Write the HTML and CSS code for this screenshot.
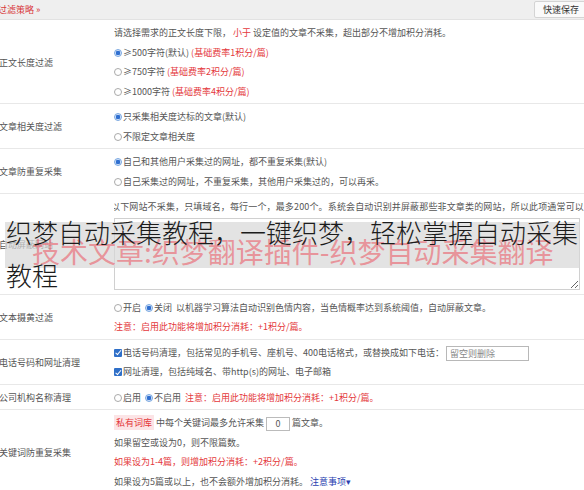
FILE: index.html
```html
<!DOCTYPE html>
<html>
<head>
    <title>过滤策略</title>
    <meta charset="utf-8">
    <link rel="stylesheet" href="styles.css">
</head>
<body>

    <!-- Header -->
    <div class="bar">
        <span class="bar-title">过滤策略 »</span>
        <button class="save">快速保存</button>
    </div>

    <div class="row">
        <div class="label">正文长度过滤</div>
        <div class="body">
            <p>请选择需求的正文长度下限， <em>小于</em> 设定值的文章不采集，超出部分不增加积分消耗。</p>
            <p><i class="radio on"></i>≥500字符(默认) <em>(基础费率1积分/篇)</em></p>
            <p><i class="radio"></i>≥750字符 <em>(基础费率2积分/篇)</em></p>
            <p><i class="radio"></i>≥1000字符 <em>(基础费率4积分/篇)</em></p>
        </div>
    </div>

    <div class="row">
        <div class="label">文章相关度过滤</div>
        <div class="body">
            <p><i class="radio on"></i>只采集相关度达标的文章(默认)</p>
            <p><i class="radio"></i>不限定文章相关度</p>
        </div>
    </div>

    <div class="row">
        <div class="label">文章防重复采集</div>
        <div class="body">
            <p><i class="radio on"></i>自己和其他用户采集过的网址，都不重复采集(默认)</p>
            <p><i class="radio"></i>自己采集过的网址，不重复采集，其他用户采集过的，可以再采。</p>
        </div>
    </div>

    <div class="row">
        <div class="label">自动屏蔽网站</div>
        <div class="body">
            <p class="wide">以下网站不采集，只填域名，每行一个，最多200个。系统会自动识别并屏蔽那些非文章类的网站，所以此项通常可以留空。</p>
            <textarea class="sites"></textarea>
        </div>
    </div>

    <div class="row">
        <div class="label">文本摄黄过滤</div>
        <div class="body">
            <p><i class="radio"></i>开启 &nbsp;<i class="radio on"></i>关闭 &nbsp;以机器学习算法自动识别色情内容，当色情概率达到系统阈值，自动屏蔽文章。</p>
            <p><em>注意：启用此功能将增加积分消耗：+1积分/篇。</em></p>
        </div>
    </div>

    <div class="row">
        <div class="label">电话号码和网址清理</div>
        <div class="body">
            <p><i class="check"></i>电话号码清理，包括常见的手机号、座机号、400电话格式，或替换成如下电话：<input class="phone" type="text" placeholder="留空则删除"></p>
            <p><i class="check"></i>网址清理，包括纯域名、带http(s)的网址、电子邮箱</p>
        </div>
    </div>

    <div class="row">
        <div class="label">公司机构名称清理</div>
        <div class="body">
            <p><i class="radio"></i>启用 &nbsp;<i class="radio on"></i>不启用 &nbsp;<em>注意：启用此功能将增加积分消耗：+1积分/篇。</em></p>
        </div>
    </div>

    <div class="row">
        <div class="label">关键词防重复采集</div>
        <div class="body">
            <p><span class="tag">私有词库</span> 中每个关键词最多允许采集<input class="num" type="text" value="0">篇文章。</p>
            <p>如果留空或设为0，则不限篇数。</p>
            <p><em>如果设为1-4篇，则增加积分消耗：+2积分/篇。</em></p>
            <p>如果设为5篇或以上，也不会额外增加积分消耗。 <a class="more" href="#">注意事项▾</a></p>
        </div>
    </div>

    <!-- overlay caption -->
    <div class="shade"></div>
    <div class="mark">技术文章:织梦翻译插件-织梦自动采集翻译</div>
    <div class="caption first">织梦自动采集教程，一键织梦，轻松掌握自动采集</div>
    <div class="caption second">教程</div>

</body>
</html>
```

FILE: styles.css
```css
html, body {
    overflow: hidden;
}

body {
    margin: 0;
    position: relative;
    background-color: #fff;
    color: #555;
    font-family: "Noto Sans CJK SC", "Noto Sans", sans-serif;
    font-size: 9px;
}

p {
    margin: 0;
    line-height: 19.5px;
    white-space: nowrap;
}

em {
    font-style: normal;
    color: #e4393c;
}

.bar {
    display: flex;
    justify-content: space-between;
    align-items: center;
    height: 19px;
    background-color: #efefef;
    border-bottom: 1px solid #e2e2e2;
}

.bar-title {
    margin-left: -2px;
    color: #d9383a;
}

.save {
    height: 17px;
    margin-right: -4px;
    padding: 0 8px;
    font-family: inherit;
    font-size: 9px;
    color: #333;
    background-color: #fafafa;
    border: 1px solid #d4d4d4;
    border-radius: 2px;
}

.row {
    display: flex;
    align-items: center;
    padding: 3px 0 2px;
    border-bottom: 1px solid #e8e8e8;
}

.label {
    width: 115px;
    flex-shrink: 0;
    margin-left: -1px;
    color: #555;
}

.body {
    flex: 1;
    min-width: 0;
    overflow: hidden;
}

.wide {
    margin-left: -3px;
    letter-spacing: 0.15px;
}

.radio {
    display: inline-block;
    width: 6px;
    height: 6px;
    margin-right: 1px;
    border: 1px solid #aaa;
    border-radius: 50%;
    background-color: #fff;
    vertical-align: -1px;
}

.radio.on {
    border-color: #7aa7e0;
    background: radial-gradient(circle, #2f6fd0 0 2px, #cfe0f7 2.5px);
}

.check {
    display: inline-block;
    position: relative;
    width: 8px;
    height: 8px;
    margin-right: 1px;
    border-radius: 1px;
    background-color: #2f6fc8;
    vertical-align: -1px;
}

.check::after {
    content: "";
    position: absolute;
    left: 2.5px;
    top: 0.5px;
    width: 2px;
    height: 4.5px;
    border: solid #fff;
    border-width: 0 1.5px 1.5px 0;
    transform: rotate(40deg);
}

.sites {
    display: block;
    box-sizing: border-box;
    width: 466px;
    height: 72px;
    margin: 1px 0 2px;
    border: 1px solid #d0d0d0;
}

.phone {
    box-sizing: border-box;
    width: 83px;
    height: 15px;
    margin-left: 2px;
    padding: 0 3px;
    font-family: inherit;
    font-size: 9px;
    border: 1px solid #b8b8b8;
    vertical-align: middle;
}

.phone::placeholder {
    color: #888;
}

.num {
    box-sizing: border-box;
    width: 24px;
    height: 14px;
    margin: 0 2px;
    padding: 0;
    text-align: center;
    font-family: inherit;
    font-size: 9px;
    color: #555;
    border: 1px solid #bbb;
    vertical-align: middle;
}

.tag {
    padding: 1px 2px;
    color: #e4393c;
    background-color: #fce4e6;
}

.more {
    color: #2b3fb0;
    text-decoration: none;
}

/* caption laid over the page */
.shade {
    position: absolute;
    left: 5px;
    top: 222px;
    width: 575px;
    height: 46px;
    background-color: rgba(215, 215, 215, 0.7);
}

.mark {
    position: absolute;
    left: 32px;
    top: 236px;
    font-size: 28px;
    line-height: 30px;
    white-space: nowrap;
    color: rgba(236, 80, 92, 0.55);
}

.caption {
    position: absolute;
    left: 6px;
    font-size: 26px;
    font-weight: 300;
    line-height: 40px;
    white-space: nowrap;
    color: #1c1c1c;
}

.caption.first {
    top: 212px;
}

.caption.second {
    top: 255px;
}
```
